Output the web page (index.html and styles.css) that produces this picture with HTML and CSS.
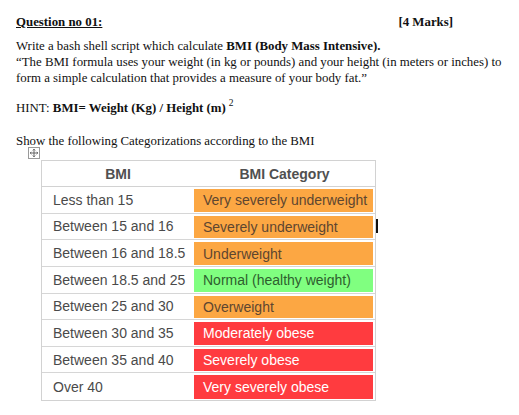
FILE: index.html
```html
<!DOCTYPE html>
<html>
<head>
<meta charset="utf-8">
<link rel="stylesheet" href="styles.css">
</head>
<body>
<div class="page">
  <div class="head">
    <span class="qtitle">Question no 01:</span>
    <span class="marks">[4 Marks]</span>
  </div>
  <p class="para">Write a bash shell script which calculate <b>BMI (Body Mass Intensive).</b><br>“The BMI formula uses your weight (in kg or pounds) and your height (in meters or inches) to form a simple calculation that provides a measure of your body fat.”</p>
  <p class="hint">HINT: <b>BMI= Weight (Kg) / Height (m)</b><sup>2</sup></p>
  <p class="show">Show the following Categorizations according to the BMI</p>
  <div class="tablewrap">
    <span class="move">
      <svg width="12" height="12" viewBox="0 0 12 12"><rect x="0.5" y="0.5" width="11" height="11" fill="#fff" stroke="#9a9a9a"/><path d="M6 2.2v7.6M2.2 6h7.6M4.8 3.4L6 2.2l1.2 1.2M4.8 8.6L6 9.8l1.2-1.2M3.4 4.8L2.2 6l1.2 1.2M8.6 4.8L9.8 6 8.6 7.2" fill="none" stroke="#555" stroke-width="0.9"/></svg>
    </span>
    <div class="bmi">
      <div class="th">BMI</div><div class="th">BMI Category</div>
      <div class="c1">Less than 15</div><div class="c2"><span class="org">Very severely underweight</span></div>
      <div class="c1">Between 15 and 16</div><div class="c2"><span class="org">Severely underweight</span></div>
      <div class="c1">Between 16 and 18.5</div><div class="c2"><span class="org">Underweight</span></div>
      <div class="c1">Between 18.5 and 25</div><div class="c2"><span class="grn">Normal (healthy weight)</span></div>
      <div class="c1">Between 25 and 30</div><div class="c2"><span class="org">Overweight</span></div>
      <div class="c1">Between 30 and 35</div><div class="c2"><span class="red">Moderately obese</span></div>
      <div class="c1">Between 35 and 40</div><div class="c2"><span class="red">Severely obese</span></div>
      <div class="c1 last">Over 40</div><div class="c2 last"><span class="red">Very severely obese</span></div>
    </div>
    <span class="caret"></span>
    <span class="resize"></span>
  </div>
</div>
</body>
</html>
```
FILE: styles.css
```css
html, body {
  margin: 0;
  background: #fff;
}
.page {
  padding: 14px 0 0 16px;
  font-family: "Liberation Serif", "Times New Roman", serif;
  font-size: 12.85px;
  line-height: 16px;
  color: #111;
}
.head {
  display: flex;
  width: 437px;
  justify-content: space-between;
  font-weight: bold;
}
.qtitle {
  text-decoration: underline;
}
.para {
  margin: 8px 0 0 0;
  width: 496px;
}
.hint {
  margin: 14px 0 0 0;
}
.hint sup {
  font-size: 9.5px;
  line-height: 0;
  vertical-align: 6px;
  margin-left: 3px;
}
.show {
  margin: 17px 0 0 0;
}
.tablewrap {
  position: relative;
  margin-left: 25px;
  margin-top: 11px;
  width: 335px;
}
.move {
  position: absolute;
  left: -13px;
  top: -13px;
  width: 12px;
  height: 12px;
  line-height: 0;
}
.bmi {
  display: grid;
  grid-template-columns: 152px 181px;
  grid-template-rows: 26px repeat(8, 26.625px);
  border: 1px solid #d2d2d2;
  font-family: "Liberation Sans", Arial, sans-serif;
  font-size: 14px;
  color: #4a4a4a;
}
.th {
  font-weight: bold;
  text-align: center;
  display: flex;
  align-items: center;
  justify-content: center;
  border-bottom: 1px solid #d2d2d2;
  color: #505050;
}
.c1 {
  display: flex;
  align-items: center;
  padding-left: 11px;
  border-bottom: 1px solid #d6d6d6;
}
.c2 {
  display: flex;
  padding: 2px 2px 1px 0;
  border-bottom: 1px solid #d6d6d6;
}
.last {
  border-bottom: none;
}
.c2 span {
  flex: 1;
  display: flex;
  align-items: center;
  padding-left: 9px;
}
.org {
  background: #fca743;
  color: #5e4630;
}
.grn {
  background: #80ff80;
  color: #2e5e2e;
}
.red {
  background: #ff3b3f;
  color: #fff;
}
.caret {
  position: absolute;
  left: 335px;
  top: 59px;
  width: 2px;
  height: 14px;
  background: #111;
}
.resize {
  position: absolute;
  right: -9px;
  bottom: -8px;
  width: 6px;
  height: 6px;
  border: 1px solid #8a8a8a;
  background: #fff;
}
```
